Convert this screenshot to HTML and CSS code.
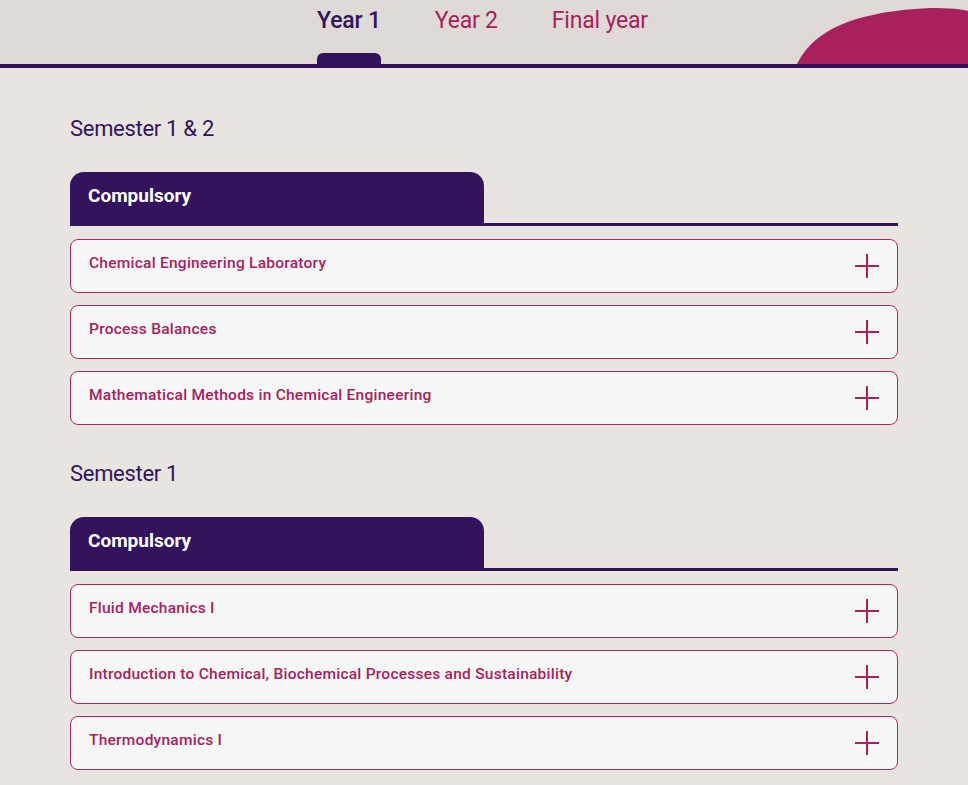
FILE: index.html
```html
<!DOCTYPE html>
<html>
  <head>
    <meta charset="UTF-8" />
    <meta name="viewport" content="width=device-width, initial-scale=1" />
    <link rel="stylesheet" href="styles.css">
  </head>
  <body>
    <header class="years">
      <nav class="year-tabs">
        <a class="year-tab active">Year 1</a>
        <a class="year-tab">Year 2</a>
        <a class="year-tab">Final year</a>
      </nav>
      <svg class="blob" width="208" height="64" viewBox="760 0 208 64">
        <path d="M797 64 C812 34 846 12 930 8 C950 8 962 9 968 11 L968 64 Z" fill="#a8215e" />
      </svg>
    </header>

    <main class="modules">
      <section class="semester">
        <h2 class="semester-title">Semester 1 &amp; 2</h2>
        <div class="group-head">
          <div class="group-tab">Compulsory</div>
          <div class="group-line"></div>
        </div>
        <ul class="module-list">
          <li class="module">
            <span class="module-name">Chemical Engineering Laboratory</span>
            <svg class="plus" width="24" height="24" viewBox="0 0 24 24"><path d="M12 0V24M0 12H24" /></svg>
          </li>
          <li class="module">
            <span class="module-name">Process Balances</span>
            <svg class="plus" width="24" height="24" viewBox="0 0 24 24"><path d="M12 0V24M0 12H24" /></svg>
          </li>
          <li class="module">
            <span class="module-name">Mathematical Methods in Chemical Engineering</span>
            <svg class="plus" width="24" height="24" viewBox="0 0 24 24"><path d="M12 0V24M0 12H24" /></svg>
          </li>
        </ul>
      </section>

      <section class="semester">
        <h2 class="semester-title">Semester 1</h2>
        <div class="group-head">
          <div class="group-tab">Compulsory</div>
          <div class="group-line"></div>
        </div>
        <ul class="module-list">
          <li class="module">
            <span class="module-name">Fluid Mechanics I</span>
            <svg class="plus" width="24" height="24" viewBox="0 0 24 24"><path d="M12 0V24M0 12H24" /></svg>
          </li>
          <li class="module">
            <span class="module-name">Introduction to Chemical, Biochemical Processes and Sustainability</span>
            <svg class="plus" width="24" height="24" viewBox="0 0 24 24"><path d="M12 0V24M0 12H24" /></svg>
          </li>
          <li class="module">
            <span class="module-name">Thermodynamics I</span>
            <svg class="plus" width="24" height="24" viewBox="0 0 24 24"><path d="M12 0V24M0 12H24" /></svg>
          </li>
        </ul>
      </section>
    </main>
  </body>
</html>
```

FILE: styles.css
```css
:root {
  --purple: #33145c;
  --magenta: #a8215e;
  --header-bg: #dfdad5;
  --page-bg: #e8e5e1;
}

* {
  box-sizing: border-box;
}

body {
  margin: 0px;
  padding: 0px;
  background-color: var(--page-bg);
  font-family: Roboto, "Liberation Sans", sans-serif;
  overflow: hidden;
}

.years {
  position: relative;
  height: 68px;
  background-color: var(--header-bg);
  border-bottom: 4px solid var(--purple);
}

.year-tabs {
  display: flex;
  justify-content: center;
  gap: 54px;
  height: 64px;
  padding-right: 3px;
}

.year-tab {
  display: flex;
  flex-direction: column;
  justify-content: space-between;
  padding-top: 7px;
  font-size: 23px;
  line-height: 28px;
  letter-spacing: -0.2px;
  color: var(--magenta);
  cursor: pointer;
}

.year-tab::after {
  content: "";
  height: 11px;
}

.year-tab.active {
  color: var(--purple);
  font-weight: 500;
}

.year-tab.active::after {
  background-color: var(--purple);
  border-radius: 6px 6px 0 0;
}

.blob {
  position: absolute;
  right: 0;
  top: 0;
}

.modules {
  padding: 47px 70px 0 70px;
}

.semester {
  margin-bottom: 35px;
}

.semester-title {
  margin: 0px;
  font-size: 22px;
  font-weight: 400;
  line-height: 28px;
  letter-spacing: -0.3px;
  color: var(--purple);
}

.group-head {
  display: flex;
  margin-top: 29px;
}

.group-tab {
  width: 414px;
  height: 54px;
  padding: 12px 18px 0 18px;
  background-color: var(--purple);
  border-radius: 14px 14px 0 0;
  color: #fff;
  font-size: 19px;
  font-weight: 700;
  line-height: 24px;
}

.group-line {
  flex: 1;
  align-self: flex-end;
  height: 3px;
  background-color: var(--purple);
}

.module-list {
  list-style: none;
  margin: 13px 0 0 0;
  padding: 0px;
  display: flex;
  flex-direction: column;
  gap: 12px;
}

.module {
  display: flex;
  justify-content: space-between;
  align-items: center;
  height: 54px;
  padding: 0 18px 7px 18px;
  background-color: #f5f6f6;
  border: 1px solid #b3245f;
  border-radius: 8px;
  cursor: pointer;
}

.module-name {
  font-size: 15.5px;
  font-weight: 500;
  color: var(--magenta);
  letter-spacing: 0.25px;
}

.plus {
  margin-top: 7px;
  stroke: var(--magenta);
  stroke-width: 2;
  fill: none;
}
```
